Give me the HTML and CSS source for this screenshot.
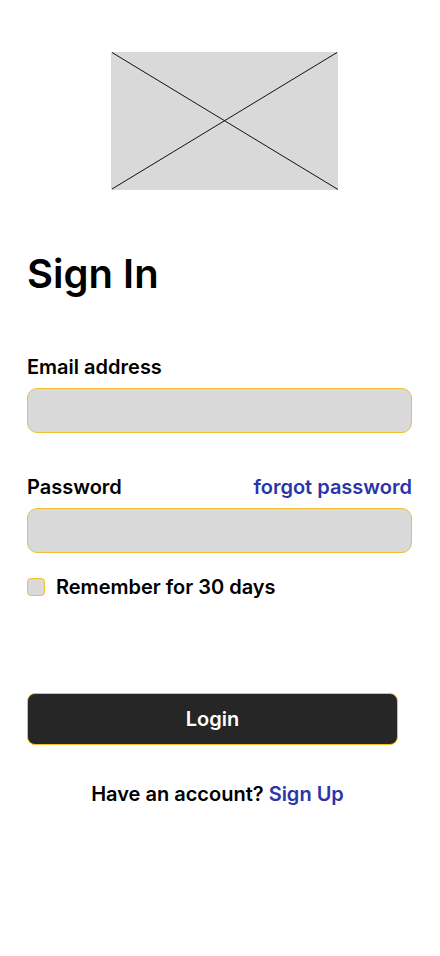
FILE: index.html
```html
<!DOCTYPE html>
<html lang="en">
<head>
<meta charset="utf-8">
<title>Sign In</title>
<link rel="stylesheet" href="styles.css">
</head>
<body>
<main class="page">
  <div class="logo">
    <svg viewBox="0 0 227 138" preserveAspectRatio="none" width="227" height="138">
      <rect x="0" y="0" width="227" height="138" fill="#d9d9d9"/>
      <line x1="1" y1="0.5" x2="227" y2="137.5" stroke="#111" stroke-width="1"/>
      <line x1="1" y1="137" x2="226" y2="0.5" stroke="#111" stroke-width="1"/>
    </svg>
  </div>
  <h1 class="title">Sign In</h1>
  <form class="form">
    <div class="field">
      <label class="label" for="email">Email address</label>
      <div class="input" id="email"></div>
    </div>
    <div class="field field-pw">
      <div class="label-row">
        <label class="label" for="pw">Password</label>
        <a class="link" href="#">forgot password</a>
      </div>
      <div class="input" id="pw"></div>
    </div>
    <div class="remember">
      <span class="check"></span>
      <span class="remember-text">Remember for 30 days</span>
    </div>
    <button class="login" type="button">Login</button>
    <p class="signup">Have an account? <a class="link" href="#">Sign Up</a></p>
  </form>
</main>
</body>
</html>
```
FILE: styles.css
```css
* { box-sizing: border-box; }
html, body { margin: 0; padding: 0; background: #fff; }
body {
  font-family: Inter, "Noto Sans", sans-serif;
  color: #000;
}
.page {
  padding: 52px 28px 0 27px;
  display: flex;
  flex-direction: column;
}
.logo {
  display: flex;
  justify-content: flex-start;
  padding-left: 84px;
  height: 138px;
}
.logo svg { display: block; }
.title {
  margin: 60px 0 0 0;
  font-size: 40px;
  line-height: 48px;
  font-weight: 600;
  letter-spacing: 0;
}
.form {
  display: flex;
  flex-direction: column;
  margin-top: 57px;
}
.field { display: flex; flex-direction: column; gap: 9px; }
.field-pw { margin-top: 42px; }
.label-row { display: flex; justify-content: space-between; align-items: baseline; }
.label {
  font-size: 20px;
  line-height: 24px;
  font-weight: 600;
}
.link {
  color: #2b35a8;
  text-decoration: none;
  font-size: 20px;
  line-height: 24px;
  font-weight: 600;
}
.input {
  height: 45px;
  background: #d9d9d9;
  border: 1px solid #f3bf2f;
  border-radius: 10px;
}
.remember {
  display: flex;
  align-items: center;
  gap: 11px;
  margin-top: 22px;
}
.check {
  width: 18px;
  height: 18px;
  background: #d9d9d9;
  border: 1px solid #f3bf2f;
  border-radius: 4px;
}
.remember-text {
  font-size: 20px;
  line-height: 24px;
  font-weight: 600;
}
.login {
  margin-top: 94px;
  width: 371px;
  height: 52px;
  background: #262626;
  color: #fff;
  border: 1px solid #f3bf2f;
  border-radius: 8px;
  font-family: Inter, "Noto Sans", sans-serif;
  font-size: 20px;
  font-weight: 600;
  padding: 0;
}
.signup {
  margin: 37px 0 0 0;
  width: 381px;
  text-align: center;
  font-size: 20px;
  line-height: 24px;
  font-weight: 600;
}
```
